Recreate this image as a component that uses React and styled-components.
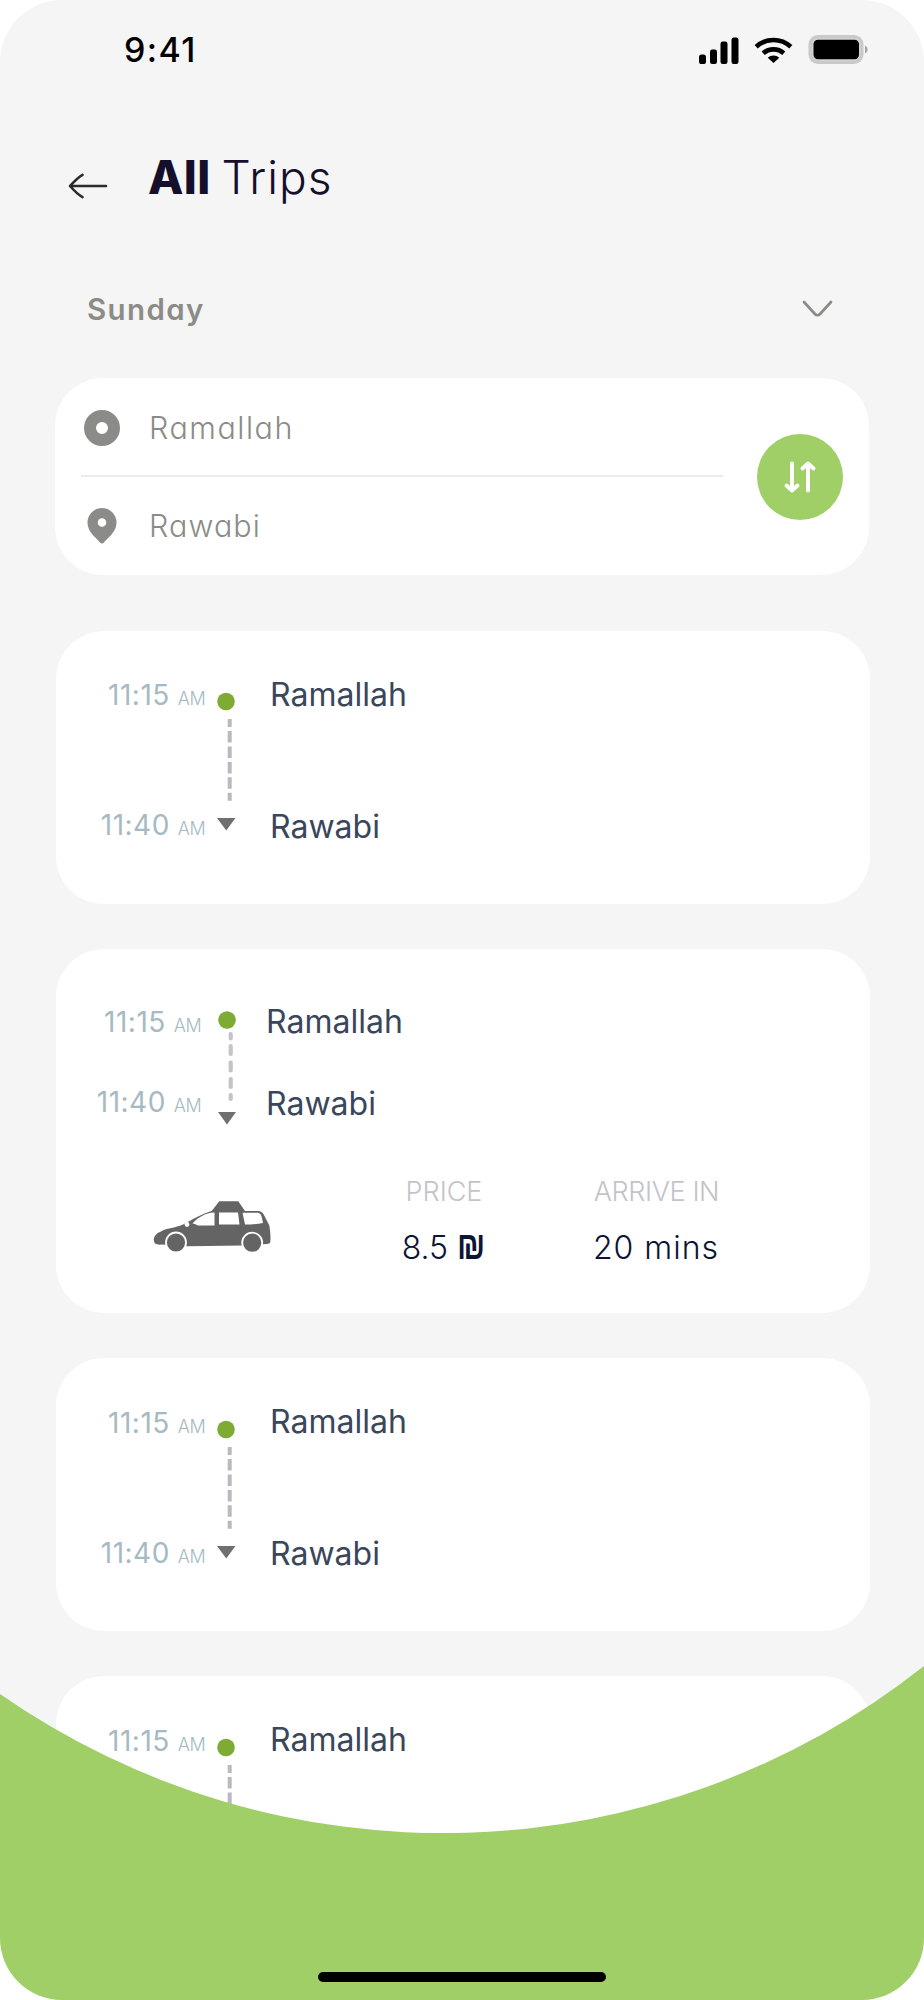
import React from "react";
import styled, { createGlobalStyle } from "styled-components";

const GlobalStyle = createGlobalStyle`
  * { box-sizing: border-box; }
  body { margin: 0; background: #fff; }
`;

const Screen = styled.main`
  position: relative;
  width: 924px;
  height: 2000px;
  overflow: hidden;
  border-radius: 62px;
  background: #f5f5f5;
  font-family: Inter, "Liberation Sans", sans-serif;
  white-space: nowrap;
`;

const StatusBar = styled.header`
  display: flex;
  align-items: center;
  justify-content: space-between;
  height: 98px;
  padding: 0 56px 0 124px;
`;

const Clock = styled.time`
  padding-top: 2px;
  font-size: 34px;
  font-weight: 500;
  line-height: 40px;
  letter-spacing: 1.4px;
  color: #000;
`;

const StatusIcons = styled.svg`
  display: block;
  width: 172px;
  height: 34px;
`;

const TitleBar = styled.div`
  display: flex;
  align-items: center;
  height: 156px;
  padding-left: 68px;
`;

const BackButton = styled.button`
  display: flex;
  width: 40px;
  height: 28px;
  margin: 20px 40px 0 0;
  padding: 0;
  border: 0;
  background: none;
`;

const Title = styled.h1`
  margin: 0;
  padding-top: 1px;
  font-size: 46px;
  font-weight: 300;
  line-height: 56px;
  letter-spacing: 1px;
  word-spacing: -3px;
  color: #150f2b;
  b { font-weight: 800; letter-spacing: 0.4px; }
`;

const DayPicker = styled.div`
  display: flex;
  align-items: center;
  justify-content: space-between;
  height: 110px;
  padding: 0 91px 0 87px;
  font-size: 29.5px;
  font-weight: 600;
  letter-spacing: 1.4px;
  font-feature-settings: "cv11" 1;
  color: #8b8c87;
`;

const SearchCard = styled.section`
  display: flex;
  align-items: center;
  width: 814px;
  height: 197px;
  margin: 14px 0 0 55px;
  padding: 0 26px;
  border-radius: 48px;
  background: #fff;
`;

const Stops = styled.div`
  align-self: flex-start;
  width: 642px;
  padding-top: 2px;
`;

const Stop = styled.div`
  display: flex;
  align-items: center;
  height: 95px;
  padding-left: 2px;
  gap: 28px;
  font-size: 30.5px;
  font-weight: 300;
  letter-spacing: ${(p) => p.$spacing}px;
  font-feature-settings: "cv11" 1;
  color: #8b8c87;
  & + & { height: 99px; border-top: 2px solid #ebebe8; }
`;

const SwapButton = styled.button`
  display: flex;
  align-items: center;
  justify-content: center;
  width: 86px;
  height: 86px;
  margin-left: auto;
  padding: 0;
  border: 0;
  border-radius: 50%;
  background: #a0cf67;
`;

const TripList = styled.div`
  display: flex;
  flex-direction: column;
  gap: 45px;
  padding: 55.5px 54px 0 56px;
`;

const TripCard = styled.article`
  height: ${(p) => (p.$open ? 364.5 : 273)}px;
  border-radius: 48px;
  background: #fff;
`;

const Route = styled.div`
  display: flex;
  align-items: flex-start;
  height: ${(p) => (p.$open ? 218 : 273)}px;
  padding-left: ${(p) => (p.$open ? 0 : 4)}px;
`;

const Times = styled.div`
  display: flex;
  flex-direction: column;
  align-items: flex-end;
  width: 145px;
  gap: ${(p) => (p.$open ? 40 : 90)}px;
  padding-top: ${(p) => (p.$open ? 53 : 44.5)}px;
`;

const Time = styled.span`
  height: 40px;
  font-size: 28px;
  font-weight: 400;
  line-height: 40px;
  letter-spacing: 0.5px;
  color: #a6bac3;
  small { margin-left: 8px; font-size: 18px; font-weight: 300; letter-spacing: -0.6px; }
`;

const Rail = styled.svg`
  flex: none;
  width: 20px;
  margin-left: ${(p) => (p.$open ? 16 : 11)}px;
  margin-top: 61.5px;
`;

const Places = styled.div`
  display: flex;
  flex-direction: column;
  gap: 42px;
  gap: ${(p) => (p.$open ? 42 : 92)}px;
  margin-left: ${(p) => (p.$open ? 29 : 34)}px;
  padding-top: ${(p) => (p.$open ? 53.5 : 44)}px;
`;

const Place = styled.span`
  font-size: 32px;
  font-weight: 400;
  line-height: 40px;
  color: #3a465a;
`;

const Details = styled.div`
  display: flex;
  align-items: flex-start;
  padding-left: 96px;
`;

const CarIcon = styled.svg`
  flex: none;
  width: 122px;
  height: 56px;
  margin-top: 32px;
`;

const Fact = styled.dl`
  display: flex;
  flex-direction: column;
  align-items: center;
  width: 126px;
  margin: 5px 0 0 ${(p) => p.$before}px;
`;

const FactLabel = styled.dt`
  padding-left: 1px;
  font-size: 27px;
  font-weight: 300;
  line-height: 40px;
  letter-spacing: ${(p) => p.$spacing}px;
  color: #c3c3c9;
`;

const FactValue = styled.dd`
  height: 40px;
  margin: 16px 0 0;
  font-size: 32px;
  font-weight: 300;
  line-height: 40px;
  letter-spacing: ${(p) => p.$spacing}px;
  color: #0c1533;
`;

const Shekel = styled.b`
  display: inline-block;
  font-family: "Liberation Sans", sans-serif;
  font-size: 32px;
  font-weight: 700;
  line-height: 40px;
  transform: scaleY(1.2);
  transform-origin: 50% 31px;
`;

const BottomWave = styled.svg`
  position: absolute;
  left: 0;
  bottom: 0;
  width: 924px;
  height: 340px;
`;

const HomeIndicator = styled.div`
  position: absolute;
  left: 318px;
  bottom: 18px;
  width: 288px;
  height: 10px;
  border-radius: 5px;
  background: #000;
`;

function StatusGlyphs() {
  return (
    <StatusIcons viewBox="0 0 172 34">
      <rect x="3" y="22.5" width="7" height="9.5" rx="2.6" />
      <rect x="14" y="17.5" width="7" height="14.5" rx="2.2" />
      <rect x="24.5" y="9.5" width="7" height="22.5" rx="2.2" />
      <rect x="35.5" y="5.5" width="7" height="26.5" rx="2.2" />
      <g fill="none" stroke="#000" strokeWidth="4.6">
        <path d="M60.2 14.7a25.5 25.5 0 0 1 34.6 0" />
        <path d="M67.2 21.3a15.5 15.5 0 0 1 20.6 0" />
      </g>
      <path d="M77.5 31l-5.800-5.300a8.600 8.600 0 0 1 11.600 0z" />
      <rect x="112.5" y="3" width="55" height="29" rx="9.5" fill="#c9c9c9" />
      <rect x="116" y="6.2" width="48.5" height="22.600" rx="6" fill="#d4d4d4" />
      <rect x="117.5" y="7.7" width="45.5" height="19.600" rx="4.5" />
      <path d="M169 13.5c3.400 1.400 3.400 6.600 0 8z" fill="#a5a5a5" />
    </StatusIcons>
  );
}

function RouteRail({ open }) {
  return open ? (
    <Rail $open viewBox="0 0 20 116" height="116">
      <circle cx="10" cy="10" r="8.8" fill="#7eab34" />
      <path d="M13.7 24v4.5M13.7 36v8M13.7 52.5v8M13.7 69v8M13.7 85v4" stroke="#c3c3c9" strokeWidth="4.2" strokeLinecap="round" />
      <path d="M1 102h18l-9 12.5z" fill="#6f6f6f" />
    </Rail>
  ) : (
    <Rail viewBox="0 0 20 140" height="140">
      <circle cx="10" cy="9.5" r="8.8" fill="#7eab34" />
      <path d="M13.7 27v8M13.7 39v11.5M13.7 54.6v11.5M13.7 70v11.5M13.7 85.3v11.5M13.7 100.800v8" stroke="#b9b9c1" strokeWidth="4" />
      <path d="M1 126h18.5l-9.25 12.5z" fill="#6f6f6f" />
    </Rail>
  );
}

function Trip({ trip, open }) {
  return (
    <TripCard $open={open}>
      <Route $open={open}>
        <Times $open={open}>
          <Time>{trip.depart}<small>AM</small></Time>
          <Time>{trip.arrive}<small>AM</small></Time>
        </Times>
        <RouteRail open={open} />
        <Places $open={open}>
          <Place>{trip.from}</Place>
          <Place>{trip.to}</Place>
        </Places>
      </Route>
      {open && (
        <Details>
          <CarIcon viewBox="0 0 122 56">
            <path fill="#646464" d="M3 44.500C0 40 3 35 8 33C12 30 17 29.500 22 28.500C26 27 30 26.500 34 24C42 19.500 51 14.500 59.700 12L67.300 2.200H86.300L93 12H106Q110 12.200 112 16L117.300 26.500Q119 35 118.300 43Q118 44.800 115 45L90 46.500L36 47.200L10 45.500Q5 46 3 44.500Z" />
            <path fill="#fff" d="M40.500 24.500C46 18.500 53 14 62.500 13.500V26.500H46Q42.500 24.500 40.500 24.500zM67 13.500H86L87.500 25.500H67zM90.500 13.700H106Q108.500 14 109.500 17L111 24Q102 25.500 93 25.500z" />
            <circle cx="35" cy="25.500" r="2.400" fill="#fff" />
            <g fill="#646464" stroke="#fff" strokeWidth="1.800">
              <circle cx="24" cy="43.500" r="10" />
              <circle cx="100.200" cy="43.700" r="10" />
            </g>
          </CarIcon>
          <Fact $before={106.5}>
            <FactLabel $spacing={0}>PRICE</FactLabel>
            <FactValue $spacing={0}>8.5 <Shekel>₪</Shekel></FactValue>
          </Fact>
          <Fact $before={86.5}>
            <FactLabel $spacing={-0.4}>ARRIVE IN</FactLabel>
            <FactValue $spacing={1}>20 mins</FactValue>
          </Fact>
        </Details>
      )}
    </TripCard>
  );
}

const trip = { depart: "11:15", arrive: "11:40", from: "Ramallah", to: "Rawabi" };

export default function App() {
  return (
    <Screen>
      <GlobalStyle />
      <StatusBar>
        <Clock>9:41</Clock>
        <StatusGlyphs />
      </StatusBar>
      <TitleBar>
        <BackButton aria-label="Back">
          <svg width="40" height="28" viewBox="0 0 40 28" fill="none" stroke="#2b2b2b" strokeWidth="2.6" strokeLinecap="round" strokeLinejoin="round">
            <path d="M38 14H2.500M14.500 2.800C10 5.500 6 9.500 2 14C6 18.500 10 22.500 14.500 25.200" />
          </svg>
        </BackButton>
        <Title><b>All</b> Trips</Title>
      </TitleBar>
      <DayPicker>
        Sunday
        <svg width="31" height="20" viewBox="0 0 31 20" fill="none" stroke="#8b8c87" strokeWidth="2.7" strokeLinecap="round">
          <path d="M2 3L12.500 14.500Q15.500 18 18.500 14.500L29 3" />
        </svg>
      </DayPicker>
      <SearchCard>
        <Stops>
          <Stop $spacing={1.5}>
            <svg width="38" height="38" viewBox="0 0 38 38">
              <circle cx="19" cy="19" r="12" fill="none" stroke="#8b8c87" strokeWidth="12" />
            </svg>
            Ramallah
          </Stop>
          <Stop $spacing={1.1}>
            <svg width="38" height="38" viewBox="0 0 38 38">
              <path fill="#8b8c87" fillRule="evenodd" d="M19 1A14.500 14.500 0 0 0 4.500 15.500C4.500 25 13 30.500 17 35.500Q19 37.500 21 35.500C25 30.500 33.500 25 33.500 15.500A14.500 14.500 0 0 0 19 1ZM19 11.200A4.300 4.300 0 1 1 19 19.800A4.300 4.300 0 1 1 19 11.200Z" />
            </svg>
            Rawabi
          </Stop>
        </Stops>
        <SwapButton aria-label="Swap">
          <svg width="34" height="34" viewBox="0 0 34 34" fill="none" stroke="#fff" strokeWidth="4" strokeLinecap="round" strokeLinejoin="round">
            <path d="M9 3.500V30M3.500 25.500L9 30.500L14.500 25.500M25 30.500V4M19.500 8.500L25 3.500L30.500 8.500" />
          </svg>
        </SwapButton>
      </SearchCard>
      <TripList>
        <Trip trip={trip} />
        <Trip trip={trip} open />
        <Trip trip={trip} />
        <Trip trip={trip} />
      </TripList>
      <BottomWave viewBox="0 1660 924 340">
        <path fill="#a0cf67" d="M0 1694A775.500 775.500 0 0 0 924 1666V2000H0Z" />
      </BottomWave>
      <HomeIndicator />
    </Screen>
  );
}
